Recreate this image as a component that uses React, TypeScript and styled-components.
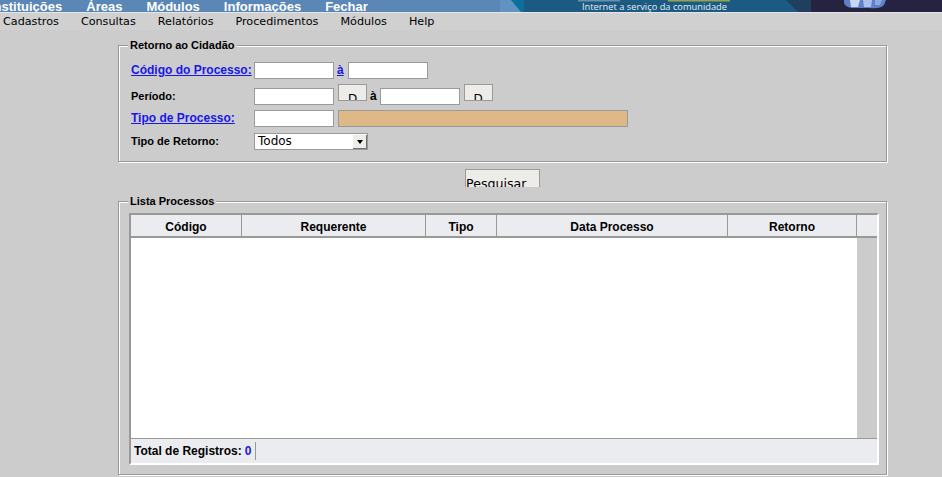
import React from 'react';
import styled, { createGlobalStyle } from 'styled-components';

const GlobalStyle = createGlobalStyle`
  html, body { margin: 0; padding: 0; background: #cccccc; }
  body { font-family: "Liberation Sans", Arial, sans-serif; width: 942px; height: 477px; overflow: hidden; }
`;

const Page = styled.div`
  width: 942px;
  height: 477px;
  overflow: hidden;
  background: #cccccc;
`;

const TopBar = styled.header`
  display: flex;
  height: 12px;
  overflow: hidden;
  background: #5a87b5;
`;

const TopNav = styled.nav`
  display: flex;
  gap: 24px;
  margin-left: -10px;
  flex: 1;
`;

const TopItem = styled.a`
  font: bold 13px/13px "Liberation Sans", Arial, sans-serif;
  color: #ffffff;
  white-space: nowrap;
  text-decoration: none;
`;

const Banner = styled.svg`
  flex: none;
  display: block;
`;

const MenuBar = styled.div`
  display: flex;
  gap: 22px;
  height: 17px;
  padding-left: 3px;
  border-top: 1px solid #e6e6e6;
  background: #d0d0d0;
`;

const MenuItem = styled.span`
  font: 11.2px/17px "DejaVu Sans", sans-serif;
  color: #000;
  white-space: nowrap;
`;

const Main = styled.main`
  display: flex;
  flex-direction: column;
  padding-left: 118px;
`;

const Fieldset = styled.fieldset<{ $mt: number; $pt: number; $pb: number }>`
  margin: ${(p) => p.$mt}px 0 0;
  width: 769px;
  min-width: 0;
  box-sizing: border-box;
  padding: ${(p) => p.$pt}px 7px ${(p) => p.$pb}px 10px;
  border: 1px solid #999999;
  box-shadow: inset 1px 1px 0 #ffffff, 1px 1px 0 #ffffff;
`;

const Legend = styled.legend`
  margin-left: -1px;
  padding: 0 2px;
  font: bold 11px/13px "Liberation Sans", Arial, sans-serif;
  color: #000;
  background: #cccccc;
`;

const Form = styled.div`
  display: flex;
  flex-direction: column;
  gap: 5px;
  padding-left: 2px;
`;

const Row = styled.div<{ $h?: number; $mt?: number }>`
  display: flex;
  align-items: flex-end;
  height: ${(p) => p.$h ?? 17}px;
  margin-top: ${(p) => p.$mt ?? 0}px;
`;

const Label = styled.span`
  width: 123px;
  flex: none;
  font: bold 11px/17px "Liberation Sans", Arial, sans-serif;
  color: #000;
`;

const LinkLabel = styled.a`
  width: 123px;
  flex: none;
  font: bold 12px/17px "Liberation Sans", Arial, sans-serif;
  color: #1717ea;
  text-decoration: underline;
  cursor: pointer;
`;

const Sep = styled.a<{ $link?: boolean; $ml: number; $mr: number }>`
  margin: 0 ${(p) => p.$mr}px 0 ${(p) => p.$ml}px;
  font: bold 12px/17px "Liberation Sans", Arial, sans-serif;
  color: ${(p) => (p.$link ? '#1717ea' : '#000')};
  text-decoration: ${(p) => (p.$link ? 'underline' : 'none')};
`;

const TextInput = styled.input`
  width: 80px;
  height: 17px;
  box-sizing: border-box;
  margin: 0;
  padding: 0 2px;
  border: 1px solid #9a9a9a;
  background: #ffffff;
  font: 12px "DejaVu Sans", sans-serif;
  outline: none;
`;

const DateButton = styled.button`
  align-self: flex-start;
  display: flex;
  justify-content: center;
  align-items: flex-start;
  width: 29px;
  height: 17px;
  box-sizing: border-box;
  margin: 0 0 0 4px;
  padding: 7px 0 0;
  overflow: hidden;
  border: 1px solid #9a9a9a;
  background: #eeece9;
  font: 12px/14px "DejaVu Sans", sans-serif;
  color: #000;
`;

const ReadonlyField = styled.div`
  width: 290px;
  height: 17px;
  box-sizing: border-box;
  margin-left: 4px;
  border: 1px solid #9a9a9a;
  background: #deb887;
`;

const SelectBox = styled.div`
  display: flex;
  width: 114px;
  height: 17px;
  box-sizing: border-box;
  border: 1px solid #9a9a9a;
  background: #ffffff;
`;

const SelectValue = styled.span`
  flex: 1;
  padding-left: 3px;
  font: 12px/15px "DejaVu Sans", sans-serif;
  color: #000;
`;

const SelectArrow = styled.span`
  width: 15px;
  display: flex;
  align-items: center;
  justify-content: center;
  background: #eeece9;
  box-shadow: inset 1px 1px 0 #ffffff, inset -1px -1px 0 #707070;
  &::after {
    content: '';
    border-left: 3px solid transparent;
    border-right: 3px solid transparent;
    border-top: 4px solid #000;
  }
`;

const ButtonRow = styled.div`
  display: flex;
  justify-content: center;
  width: 769px;
  margin-top: 7px;
`;

const SearchButton = styled.button`
  display: flex;
  align-items: flex-start;
  width: 75px;
  height: 18px;
  box-sizing: border-box;
  margin: 0;
  padding: 6px 0 0 0;
  overflow: hidden;
  border: 1px solid #9a9a9a;
  border-bottom: none;
  background: #eeece9;
  font: 12.6px/15px "DejaVu Sans", sans-serif;
  color: #000;
`;

const TableFrame = styled.div`
  width: 750px;
  box-sizing: border-box;
  display: flex;
  flex-direction: column;
  border-style: solid;
  border-width: 2px;
  border-color: #999999 #ffffff #ffffff #999999;
`;

const HeaderRow = styled.div`
  display: grid;
  grid-template-columns: 110px 183px 70px 230px 128px 20px;
  column-gap: 1px;
  height: 21px;
  background: #999999;
  border-bottom: 2px solid #999999;
`;

const HeaderCell = styled.div`
  box-sizing: border-box;
  padding-top: 3px;
  background: #ebecf0;
  font: bold 12px/18px "Liberation Sans", Arial, sans-serif;
  color: #000;
  text-align: center;
`;

const Body = styled.div`
  display: flex;
  height: 200px;
`;

const BodyArea = styled.div`
  flex: 1;
  background: #ffffff;
`;

const ScrollTrack = styled.div`
  width: 20px;
  background: #cccccc;
`;

const Footer = styled.div`
  display: flex;
  align-items: center;
  height: 24px;
  padding-left: 3px;
  border-top: 1px solid #999999;
  background: #ebecf0;
  font: bold 12px "Liberation Sans", Arial, sans-serif;
  color: #000;
`;

const Count = styled.span`
  margin-left: 3px;
  color: #1717ea;
`;

const FooterDivider = styled.span`
  width: 1px;
  height: 18px;
  margin-left: 4px;
  background: #999999;
`;

const topItems = ['Instituições', 'Áreas', 'Módulos', 'Informações', 'Fechar'];
const menuItems = ['Cadastros', 'Consultas', 'Relatórios', 'Procedimentos', 'Módulos', 'Help'];
const columns = ['Código', 'Requerente', 'Tipo', 'Data Processo', 'Retorno', ''];

function BannerArt() {
  return (
    <Banner width="442" height="12" viewBox="0 0 442 12">
      <rect x="0" y="0" width="442" height="12" fill="#6092c2" />
      <polygon points="11,0 442,0 442,12 21,12" fill="#0c6f9c" />
      <polygon points="24,0 442,0 442,12 24,12" fill="#1b5b83" />
      <polygon points="286,0 442,0 442,12 298,12" fill="#203f5e" />
      <polygon points="311,0 442,0 442,12 311,12" fill="#25233f" />
      <path d="M344 0 H386 L384 5 Q380 9 370 8 L352 8 Q345 7 344 3 Z" fill="#5f80c8" />
      <path d="M350 0 H360 L358 7 H351 Z" fill="#c9d8f2" />
      <path d="M363 0 H372 L371 7 H364 Z" fill="#aac0ea" />
      <path d="M375 0 H382 L380 5 H375 Z" fill="#8fa8e0" />
      <rect x="78" y="0" width="42" height="1.5" fill="#9fb6c8" opacity="0.6" />
      <rect x="168" y="0" width="62" height="1.5" fill="#c8c040" opacity="0.7" />
      <text x="82" y="10" fontFamily="Open Sans, Liberation Sans, sans-serif" fontSize="9.5" fill="#e6ecf2" textLength="145" lengthAdjust="spacingAndGlyphs">
        Internet a serviço da comunidade
      </text>
    </Banner>
  );
}

export default function App() {
  return (
    <Page>
      <GlobalStyle />
      <TopBar>
        <TopNav>
          {topItems.map((t) => (
            <TopItem key={t}>{t}</TopItem>
          ))}
        </TopNav>
        <BannerArt />
      </TopBar>
      <MenuBar>
        {menuItems.map((m) => (
          <MenuItem key={m}>{m}</MenuItem>
        ))}
      </MenuBar>
      <Main>
        <Fieldset $mt={9} $pt={10} $pb={11}>
          <Legend>Retorno ao Cidadão</Legend>
          <Form>
            <Row>
              <LinkLabel>Código do Processo:</LinkLabel>
              <TextInput />
              <Sep $link $ml={3} $mr={4}>à</Sep>
              <TextInput />
            </Row>
            <Row $h={21}>
              <Label>Período:</Label>
              <TextInput />
              <DateButton>D</DateButton>
              <Sep $ml={3} $mr={3}>à</Sep>
              <TextInput />
              <DateButton>D</DateButton>
            </Row>
            <Row>
              <LinkLabel>Tipo de Processo:</LinkLabel>
              <TextInput />
              <ReadonlyField />
            </Row>
            <Row $mt={1}>
              <Label>Tipo de Retorno:</Label>
              <SelectBox>
                <SelectValue>Todos</SelectValue>
                <SelectArrow />
              </SelectBox>
            </Row>
          </Form>
        </Fieldset>
        <ButtonRow>
          <SearchButton>Pesquisar</SearchButton>
        </ButtonRow>
        <Fieldset $mt={8} $pt={5} $pb={9}>
          <Legend>Lista Processos</Legend>
          <TableFrame>
            <HeaderRow>
              {columns.map((c, i) => (
                <HeaderCell key={i}>{c}</HeaderCell>
              ))}
            </HeaderRow>
            <Body>
              <BodyArea />
              <ScrollTrack />
            </Body>
            <Footer>
              Total de Registros:
              <Count>0</Count>
              <FooterDivider />
            </Footer>
          </TableFrame>
        </Fieldset>
      </Main>
    </Page>
  );
}
